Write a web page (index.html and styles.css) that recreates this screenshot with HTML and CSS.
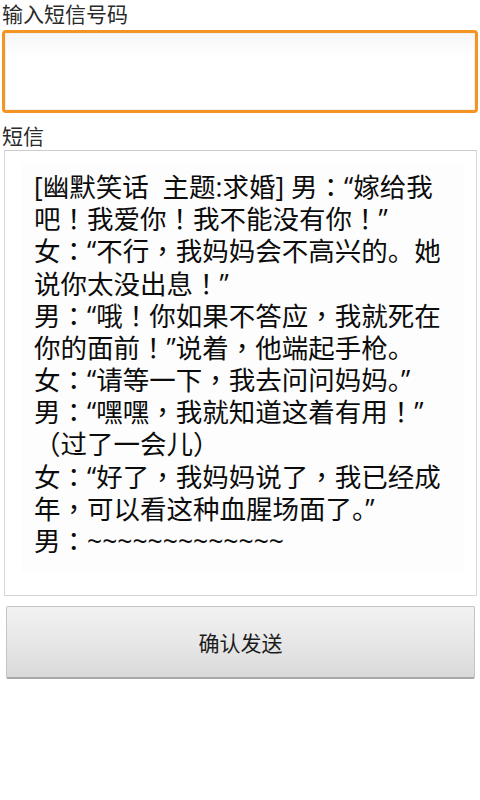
FILE: index.html
```html
<!DOCTYPE html>
<html lang="zh-CN">
<head>
<meta charset="utf-8">
<title>短信</title>
<link rel="stylesheet" href="styles.css">
</head>
<body>
<div class="screen">
  <div class="label">输入短信号码</div>
  <div class="phone-input"></div>
  <div class="label label-msg">短信</div>
  <div class="msg-box">
    <div class="msg-inner">
      <div class="line">[幽默笑话&nbsp;&nbsp;主题:求婚] 男<span class="c" lang="zh-TW">：</span>“嫁给我</div>
      <div class="line">吧<span class="c" lang="zh-TW">！</span>我爱你<span class="c" lang="zh-TW">！</span>我不能没有你<span class="c" lang="zh-TW">！</span>”</div>
      <div class="line">女<span class="c" lang="zh-TW">：</span>“不行<span class="c" lang="zh-TW">，</span>我妈妈会不高兴的。她</div>
      <div class="line">说你太没出息<span class="c" lang="zh-TW">！</span>”</div>
      <div class="line">男<span class="c" lang="zh-TW">：</span>“哦<span class="c" lang="zh-TW">！</span>你如果不答应<span class="c" lang="zh-TW">，</span>我就死在</div>
      <div class="line">你的面前<span class="c" lang="zh-TW">！</span>”说着<span class="c" lang="zh-TW">，</span>他端起手枪。</div>
      <div class="line">女<span class="c" lang="zh-TW">：</span>“请等一下<span class="c" lang="zh-TW">，</span>我去问问妈妈。”</div>
      <div class="line">男<span class="c" lang="zh-TW">：</span>“嘿嘿<span class="c" lang="zh-TW">，</span>我就知道这着有用<span class="c" lang="zh-TW">！</span>”</div>
      <div class="line">（过了一会儿）</div>
      <div class="line">女<span class="c" lang="zh-TW">：</span>“好了<span class="c" lang="zh-TW">，</span>我妈妈说了<span class="c" lang="zh-TW">，</span>我已经成</div>
      <div class="line">年<span class="c" lang="zh-TW">，</span>可以看这种血腥场面了。”</div>
      <div class="line">男<span class="c" lang="zh-TW">：</span>~~~~~~~~~~~~~</div>
    </div>
  </div>
  <div class="send-btn">确认发送</div>
</div>
</body>
</html>
```

FILE: styles.css
```css
html, body {
  margin: 0;
  padding: 0;
  background: #ffffff;
}

.screen {
  width: 480px;
  height: 800px;
  font-family: "Open Sans", "Noto Sans CJK SC", sans-serif;
  color: #111;
  display: flex;
  flex-direction: column;
}

.label {
  font-size: 21px;
  line-height: 28px;
  height: 28px;
  padding-left: 2px;
  color: #2a2a2a;
}

.phone-input {
  margin: 2px 2px 0 2px;
  height: 77px;
  border: 3px solid #f39423;
  border-radius: 4px;
  background: linear-gradient(#f6f6f6, #ffffff 30%, #ffffff);
  box-shadow: inset 0 0 0 1px #f0f0f0;
}

.label-msg {
  margin-top: 9px;
}

.msg-box {
  margin: 0 3px 0 4px;
  height: 446px;
  border: 1px solid #d6d6d6;
  border-top-color: #cccccc;
  background: #ffffff;
  padding: 12px 12px 0 16px;
  box-sizing: border-box;
}

.msg-inner {
  padding: 7px 0 16px 13px;
  background: #fdfdfd;
  font-size: 26.5px;
  line-height: 32.2px;
  color: #0c0c0c;
}

.line {
  white-space: nowrap;
  height: 32.2px;
}

.c {
  font-family: "Noto Sans CJK TC", "Noto Sans CJK SC", sans-serif;
}

.send-btn {
  margin: 10px 5px 0 6px;
  height: 73px;
  box-sizing: border-box;
  border: 1px solid #c4c4c4;
  border-bottom: 2px solid #a9a9a9;
  border-radius: 2px;
  background: linear-gradient(#f2f2f2, #e6e6e6 55%, #d9d9d9);
  display: flex;
  align-items: center;
  justify-content: center;
  font-size: 21px;
  color: #1c1c1c;
}
```
